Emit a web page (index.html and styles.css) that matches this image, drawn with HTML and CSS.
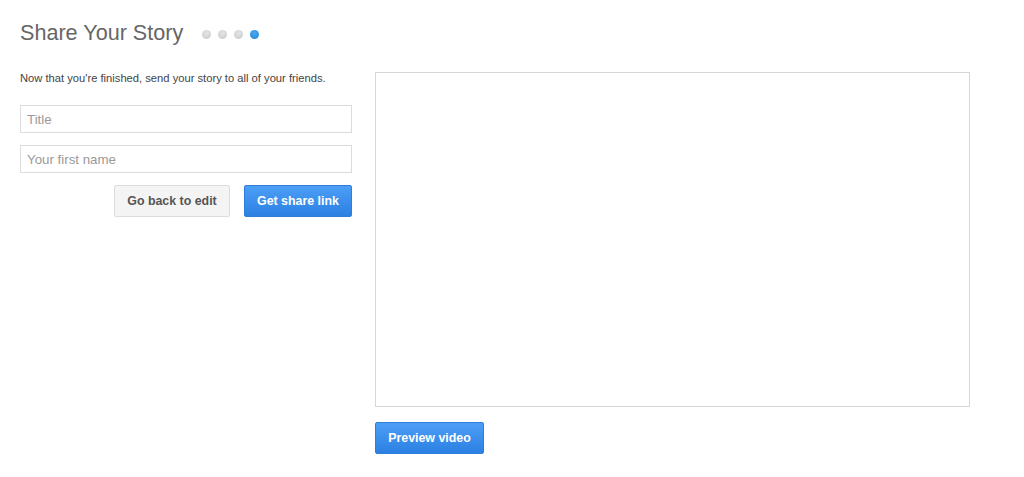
FILE: index.html
```html
<!DOCTYPE html>
<html lang="en">
<head>
    <meta charset="UTF-8">
    <meta name="viewport" content="width=device-width, initial-scale=1.0">
    <title>Share Your Story</title>
    <link rel="stylesheet" href="styles.css">
</head>
<body>

    <div class="page">
        <header class="page-header">
            <h1>Share Your Story</h1>
            <!-- Step indicator: last step active -->
            <div class="steps">
                <span class="dot"></span>
                <span class="dot"></span>
                <span class="dot"></span>
                <span class="dot active"></span>
            </div>
        </header>

        <div class="main">
            <div class="share-form">
                <p class="intro">Now that you're finished, send your story to all of your friends.</p>
                <input type="text" class="field" placeholder="Title" />
                <input type="text" class="field" placeholder="Your first name" />
                <div class="actions">
                    <button class="btn btn-grey">Go back to edit</button>
                    <button class="btn btn-blue">Get share link</button>
                </div>
            </div>

            <div class="preview">
                <div class="video-box"></div>
                <button class="btn btn-blue preview-btn">Preview video</button>
            </div>
        </div>
    </div>

</body>
</html>
```

FILE: styles.css
```css
body {
    margin: 0;
    font-family: "Liberation Sans", Arial, Helvetica, sans-serif;
    background-color: #fff;
    color: #444;
}

.page {
    padding: 20px 20px;
}

.page-header {
    display: flex;
    align-items: center;
    height: 26px;
}

.page-header h1 {
    margin: 0;
    font-size: 21.6px;
    font-weight: normal;
    line-height: 26px;
    color: #666;
}

.steps {
    display: flex;
    gap: 7px;
    margin-left: 19px;
    margin-top: 2px;
}

.dot {
    width: 9px;
    height: 9px;
    border-radius: 50%;
    background: radial-gradient(circle at 50% 35%, #e4e4e4, #c8c8c8);
}

.dot.active {
    background: radial-gradient(circle at 50% 35%, #4aa8f0, #1f84d8);
}

.main {
    display: flex;
    gap: 23px;
    margin-top: 25px;
}

.share-form {
    width: 332px;
    display: flex;
    flex-direction: column;
}

.intro {
    margin: 0 0 20px;
    font-size: 11.2px;
    line-height: 14px;
    color: #444;
}

.field {
    box-sizing: border-box;
    height: 28px;
    margin-bottom: 12px;
    padding: 0 6px;
    border: 1px solid #dcdcdc;
    font-family: inherit;
    font-size: 13.3px;
    color: #333;
}

.field::placeholder {
    color: #9a9a9a;
}

.actions {
    display: flex;
    justify-content: flex-end;
    gap: 14px;
}

.btn {
    box-sizing: border-box;
    height: 32px;
    padding: 0;
    border-radius: 2px;
    font-family: inherit;
    font-size: 12.4px;
    font-weight: bold;
    white-space: nowrap;
    cursor: pointer;
}

.btn-grey {
    width: 116px;
    border: 1px solid #dcdcdc;
    background-color: #f4f4f4;
    color: #555;
}

.btn-blue {
    width: 108px;
    border: 1px solid #2f7fd8;
    background: linear-gradient(#4c9ef6, #2c80e2);
    color: #fff;
}

.preview {
    width: 595px;
    margin-top: 1px;
}

.video-box {
    box-sizing: border-box;
    height: 335px;
    border: 1px solid #d6d6d6;
}

.preview-btn {
    width: 109px;
    margin-top: 15px;
}
```
